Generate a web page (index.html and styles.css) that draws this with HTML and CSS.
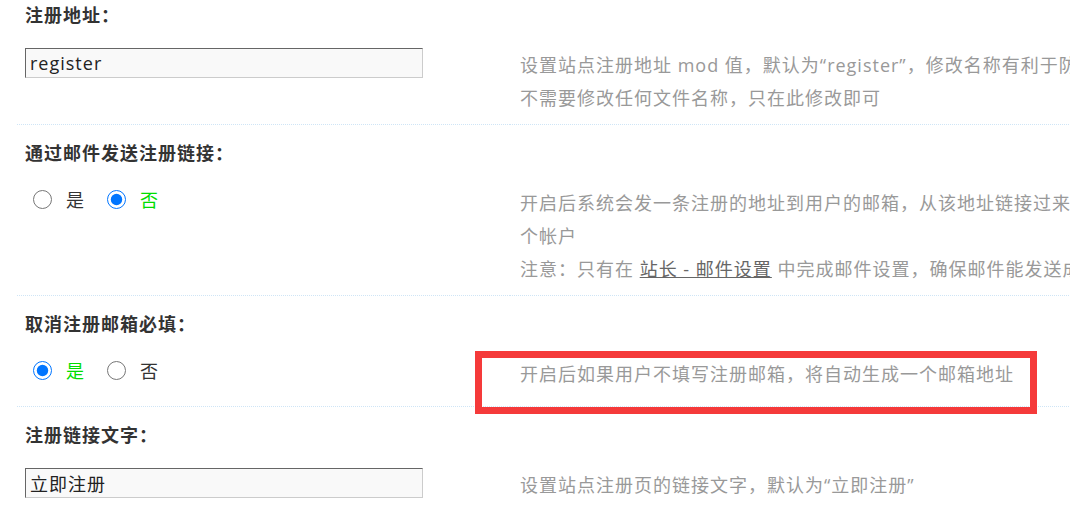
FILE: index.html
```html
<!DOCTYPE html>
<html lang="zh-CN">
<head>
<meta charset="UTF-8">
<meta name="viewport" content="width=device-width, initial-scale=1.0">
<link rel="stylesheet" href="styles.css">
<title>注册设置</title>
</head>
<body>
  <div class="page">
    <table class="tb">
      <colgroup>
        <col class="col-form">
        <col class="col-tips">
      </colgroup>
      <tr>
        <td colspan="2" class="title first">注册地址：</td>
      </tr>
      <tr>
        <td class="rowform"><input type="text" class="txt" value="register"></td>
        <td class="tips">设置站点注册地址 mod 值，默认为“register”，修改名称有利于防止恶意注册，修改后<br>不需要修改任何文件名称，只在此修改即可</td>
      </tr>

      <tr>
        <td colspan="2" class="title">通过邮件发送注册链接：</td>
      </tr>
      <tr>
        <td class="rowform">
          <div class="radios">
            <label class="opt"><input type="radio" name="sendregisterurl">是</label>
            <label class="opt on"><input type="radio" name="sendregisterurl" checked>否</label>
          </div>
        </td>
        <td class="tips">开启后系统会发一条注册的地址到用户的邮箱，从该地址链接过来的用户才可以注册，能有效防止注册多<br>个帐户<br>注意：只有在 <a href="#">站长 - 邮件设置</a> 中完成邮件设置，确保邮件能发送成功下才可以开启该功能</td>
      </tr>

      <tr>
        <td colspan="2" class="title">取消注册邮箱必填：</td>
      </tr>
      <tr>
        <td class="rowform">
          <div class="radios">
            <label class="opt on"><input type="radio" name="forgeemail" checked>是</label>
            <label class="opt"><input type="radio" name="forgeemail">否</label>
          </div>
        </td>
        <td class="tips">开启后如果用户不填写注册邮箱，将自动生成一个邮箱地址</td>
      </tr>

      <tr>
        <td colspan="2" class="title">注册链接文字：</td>
      </tr>
      <tr>
        <td class="rowform"><input type="text" class="txt" value="立即注册"></td>
        <td class="tips">设置站点注册页的链接文字，默认为“立即注册”</td>
      </tr>
    </table>

    <div class="mark"></div>
  </div>
</body>
</html>
```

FILE: styles.css
```css
html, body {
  margin: 0;
  padding: 0;
  overflow: hidden;
  background-color: #fff;
}

body {
  font-family: "Open Sans", "Noto Sans CJK SC", sans-serif;
  font-size: 18px;
  letter-spacing: 1px;
  color: #333;
}

.page {
  position: relative;
}

.tb {
  border-collapse: collapse;
  table-layout: fixed;
  width: 1300px;
  margin-left: 17px;
}

.col-form {
  width: 493px;
}

td {
  padding: 0;
  vertical-align: top;
}

.title {
  border-top: 1px dotted #cfe5f6;
  padding: 16px 0 16px 8px;
  line-height: 24px;
  font-weight: bold;
  color: #333;
}

.title.first {
  border-top: none;
  padding-top: 3px;
}

.rowform {
  padding: 5px 0 23px 8px;
}

.txt {
  box-sizing: border-box;
  width: 398px;
  height: 30px;
  margin: 0;
  padding: 0 4px;
  border: 1px solid;
  border-color: #666 #ccc #ccc #666;
  background-color: #f9f9f9;
  font-family: "Open Sans", "Noto Sans CJK SC", sans-serif;
  font-size: 18px;
  letter-spacing: 1px;
  color: #222;
  outline: none;
}

.radios {
  display: flex;
  align-items: center;
  height: 26px;
}

.opt {
  display: flex;
  align-items: center;
  margin-right: 14px;
  color: #333;
}

.opt input {
  width: 19px;
  height: 19px;
  margin: 0 14px 0 8px;
}

.opt.on {
  color: #00dd00;
}

.tips {
  padding: 6px 0 9px 10px;
  line-height: 33px;
  white-space: nowrap;
  color: #999;
}

.tips a {
  color: #666;
  text-decoration: underline;
}

.mark {
  position: absolute;
  left: 475px;
  top: 351px;
  width: 562px;
  height: 63px;
  box-sizing: border-box;
  border: 7px solid #f53a3a;
}
```
